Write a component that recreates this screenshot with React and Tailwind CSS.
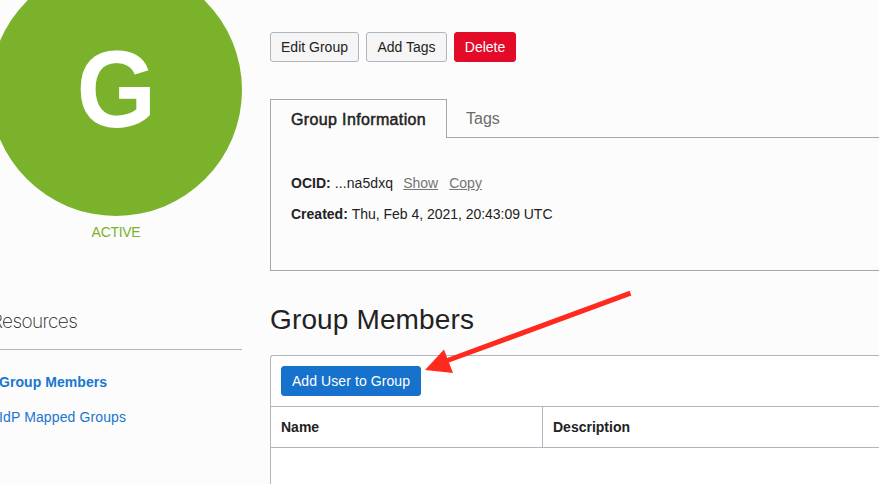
const font = "font-['Liberation_Sans',Arial,sans-serif]";

function Sidebar() {
  return (
    <aside className="w-[242px] shrink-0">
      <div className="-mt-9 -ml-2.5 flex size-[252px] items-center justify-center rounded-full bg-[#7ab22b]">
        <span className="-mt-px scale-x-[0.94] text-[109px] leading-none font-bold text-white">G</span>
      </div>
      <p className="-ml-2.5 pt-1.5 text-center text-sm tracking-[-0.3px] text-[#7ab22b]">ACTIVE</p>
      <h2 className="mt-[66px] -ml-[9px] h-[42px] border-b border-[#b3b6bc] font-['Inter',sans-serif] text-[19px] leading-7 font-extralight tracking-[-0.6px] text-[#222]">
        Resources
      </h2>
      <nav className="mt-[22px] flex flex-col gap-[15px] text-sm text-[#1976d0]">
        <a className="-ml-px font-bold tracking-[0.06px]">Group Members</a>
        <a className="-ml-px tracking-[0.12px]">IdP Mapped Groups</a>
      </nav>
    </aside>
  );
}

function Button({ children, className }) {
  return (
    <button className={`flex h-[30px] items-center justify-center rounded-[3px] border text-sm whitespace-nowrap ${className}`}>
      {children}
    </button>
  );
}

function GroupInformation() {
  return (
    <section className="mt-[37px]">
      <div className="flex h-[39px]">
        <div className="w-[177px] border-t border-x border-[#a5a7a9] pt-2 pl-5 text-base whitespace-nowrap tracking-[0.36px] [-webkit-text-stroke:0.5px_#222]">
          Group Information
        </div>
        <div className="flex-1 border-b border-[#a5a7a9] pt-2 pl-[19px] text-base text-[#6b6b6b]">Tags</div>
      </div>
      <div className="flex h-[133px] flex-col gap-[11px] border-b border-l border-[#a5a7a9] pt-[35px] pl-5 text-sm">
        <p className="flex">
          <b>OCID:</b>
          <span className="ml-1 tracking-[0.1px]">...na5dxq</span>
          <a className="ml-2.5 text-[#757575] underline">Show</a>
          <a className="ml-[11px] text-[#757575] underline">Copy</a>
        </p>
        <p className="flex">
          <b>Created:</b>
          <span className="ml-1 tracking-[-0.03px]">Thu, Feb 4, 2021, 20:43:09 UTC</span>
        </p>
      </div>
    </section>
  );
}

function GroupMembers() {
  return (
    <section className="flex flex-1 flex-col">
      <h1 className="mt-[31px] h-[53px] text-[28px] leading-9 tracking-[0.14px]">Group Members</h1>
      <div className="flex flex-1 flex-col rounded-tl-[3px] border-t border-l border-[#b0b5c0] bg-white">
        <div className="p-2.5">
          <Button className="w-[140px] border-[#1672cd] bg-[#1672cd] tracking-[0.08px] text-white">Add User to Group</Button>
        </div>
        <div className="flex h-[42px] border-y border-[#b0b5c0] text-sm font-bold">
          <div className="flex w-[272px] items-center border-r border-[#b0b5c0] pl-2.5">Name</div>
          <div className="flex items-center pl-2.5">Description</div>
        </div>
      </div>
    </section>
  );
}

export default function App() {
  return (
    <div className={`relative flex h-[484px] w-[879px] overflow-hidden bg-[#fcfcfc] text-[#222] ${font}`}>
      <Sidebar />
      <main className="ml-7 flex flex-1 flex-col pt-8">
        <div className="flex gap-[7px]">
          <Button className="w-[89px] border-[#b0b5c0] bg-[#f5f5f5]">Edit Group</Button>
          <Button className="w-[81px] border-[#b0b5c0] bg-[#f5f5f5]">Add Tags</Button>
          <Button className="w-[62px] border-[#e30b28] bg-[#e30b28] text-white">Delete</Button>
        </div>
        <GroupInformation />
        <GroupMembers />
      </main>
      <svg className="absolute top-[280px] left-[410px]" width="240" height="110" viewBox="0 0 240 110">
        <path d="M220.5 13.2 L36 81" stroke="#ff2a1d" strokeWidth="5" />
        <path d="M15 90 L34 69.5 L43 93 Z" fill="#ff2a1d" />
      </svg>
    </div>
  );
}
